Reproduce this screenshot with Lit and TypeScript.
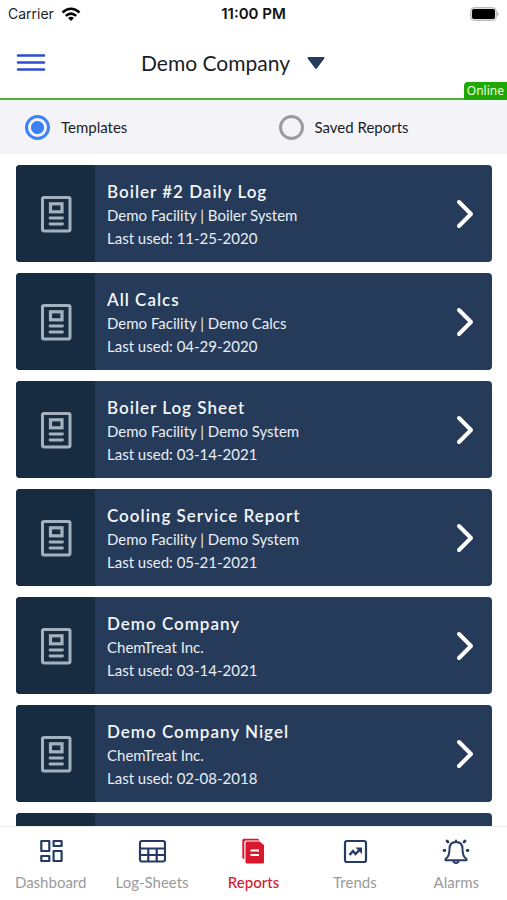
import { LitElement, html, css, svg, nothing } from "lit";
import { customElement, property, state } from "lit/decorators.js";
import { classMap } from "lit/directives/class-map.js";

interface Report {
  title: string;
  place: string;
  used: string;
}

const REPORTS: Report[] = [
  { title: "Boiler #2 Daily Log", place: "Demo Facility | Boiler System", used: "11-25-2020" },
  { title: "All Calcs", place: "Demo Facility | Demo Calcs", used: "04-29-2020" },
  { title: "Boiler Log Sheet", place: "Demo Facility | Demo System", used: "03-14-2021" },
  { title: "Cooling Service Report", place: "Demo Facility | Demo System", used: "05-21-2021" },
  { title: "Demo Company", place: "ChemTreat Inc.", used: "03-14-2021" },
  { title: "Demo Company Nigel", place: "ChemTreat Inc.", used: "02-08-2018" },
  { title: "", place: "", used: "" },
];

const ICONS = {
  Dashboard: svg`<g fill="none" stroke="currentColor" stroke-width="2.200" stroke-linejoin="round">
    <rect x="4.300" y="4" width="8" height="10"/><rect x="16.600" y="4" width="8" height="5"/>
    <rect x="4.300" y="19" width="8" height="5"/><rect x="16.600" y="14" width="8" height="10"/></g>`,
  "Log-Sheets": svg`<g fill="none" stroke="currentColor" stroke-width="2.200">
    <rect x="2" y="4" width="25" height="20.500" rx="2"/>
    <path d="M2 11.500H27M2 18H27M10.300 11.500V24M18.700 11.500V24"/></g>`,
  Reports: svg`<path fill="currentColor" d="M3.300 3.500Q3.300 1.700 5 1.700H19L20.800 3.500H7Q5.300 3.500 5.300 5.200V22.500L3.300 21Z"/>
    <path fill="currentColor" d="M6.500 6Q6.500 4.500 8 4.500H20.500L25 8V25.500Q25 26.500 24 26.500H8Q6.500 26.500 6.500 25Z"/>
    <path d="M11.500 13.500H20M11.500 18H20" stroke="#fff" stroke-width="2"/>`,
  Trends: svg`<rect x="4" y="4" width="21" height="21" rx="2" fill="none" stroke="currentColor" stroke-width="2.200"/>
    <path d="M8.500 18L12 14L14.500 17L19 12.500" fill="none" stroke="currentColor" stroke-width="2.400"/>
    <path d="M14.500 10.500H21V17Z" fill="currentColor"/>`,
  Alarms: svg`<g fill="none" stroke="currentColor" stroke-width="2" stroke-linejoin="round" stroke-linecap="round">
    <path d="M14 5C9.500 5 7.500 8 7.500 12C7.500 17.500 6.800 20 3.500 22V23.200H24.500V22C21.200 20 20.500 17.500 20.500 12C20.500 8 18.500 5 14 5Z"/>
    <path d="M11.500 24C12 26.500 16 26.500 16.500 24M14 4.500V3.500"/>
    <path d="M5 4L6 5M23 4L22 5M2 13.500H2.800M25.200 13.500H26" stroke-width="2.800"/></g>`,
};

type Tab = keyof typeof ICONS;

@customElement("report-card")
class ReportCard extends LitElement {
  @property({ attribute: false }) report!: Report;

  static styles = css`
    :host { display: block; }
    .card {
      display: flex;
      align-items: stretch;
      width: 100%;
      min-height: 97px;
      padding: 0;
      border: 0;
      border-radius: 4px;
      overflow: hidden;
      background: #263b59;
      color: #e9eef5;
      font: 15px/23px Lato, sans-serif;
      text-align: left;
      cursor: pointer;
    }
    .thumb {
      flex: none;
      width: 79px;
      display: grid;
      place-items: center;
      background: #182c41;
      color: #a5b1be;
    }
    .body {
      flex: 1;
      min-width: 0;
      padding: 14px 12px 12px;
    }
    .title, .line { display: block; }
    .title {
      font-size: 17px;
      line-height: 25px;
      font-weight: 600;
      letter-spacing: 1px;
      color: #f3f6fa;
    }
    .chevron {
      flex: none;
      align-self: center;
      margin-right: 16px;
      color: #fff;
    }
  `;

  render() {
    const { title, place, used } = this.report;
    return html`
      <button class="card" type="button">
        <span class="thumb">
          <svg width="32" height="38" viewBox="0 0 32 38" fill="none" stroke="currentColor" aria-hidden="true">
            <rect x="2.500" y="2.500" width="27.500" height="33.500" rx="1.500" stroke-width="3"/>
            <rect x="10.500" y="8.800" width="11.500" height="8" stroke-width="3.200"/>
            <path d="M10 23H22.500M10 29H22.500" stroke-width="2.800" stroke-linecap="round"/>
          </svg>
        </span>
        <span class="body">
          ${title
            ? html`<span class="title">${title}</span>
                <span class="line">${place}</span>
                <span class="line">Last used: ${used}</span>`
            : nothing}
        </span>
        <svg class="chevron" width="22" height="32" viewBox="0 0 22 32" fill="none" stroke="currentColor"
          stroke-width="4" stroke-linecap="round" stroke-linejoin="round" aria-hidden="true">
          <path d="M5 4L17 16L5 28"/>
        </svg>
      </button>
    `;
  }
}

@customElement("app-root")
class AppRoot extends LitElement {
  @state() private view = "Templates";
  @state() private tab: Tab = "Reports";

  static styles = css`
    :host {
      display: flex;
      flex-direction: column;
      height: 100vh;
      overflow: hidden;
      background: #fff;
      color: #1c1c1e;
      font: 15px/20px Lato, sans-serif;
    }
    .status {
      flex: none;
      display: grid;
      grid-template-columns: 1fr auto 1fr;
      align-items: center;
      height: 28px;
      padding: 0 8px;
      font: 14px/20px Inter, sans-serif;
    }
    .carrier { display: flex; align-items: center; gap: 7px; }
    .time { font-size: 15px; font-weight: 600; color: #111; }
    .battery { justify-self: end; }
    .header {
      flex: none;
      position: relative;
      display: grid;
      grid-template-columns: 30px 1fr 70px;
      align-items: center;
      height: 70px;
      padding: 0 16px;
      border-bottom: 2px solid #4bb536;
    }
    .menu {
      justify-self: start;
      display: flex;
      padding: 0;
      border: 0;
      background: none;
      color: #2b4fcb;
    }
    .company { justify-self: center; position: relative; display: flex; align-items: center; }
    .company select {
      appearance: none;
      border: 0;
      padding: 0 36px 0 0;
      background: none;
      color: #1c1c1e;
      font: 21px/30px Lato, sans-serif;
    }
    .company svg { position: absolute; right: 0; pointer-events: none; }
    .online {
      position: absolute;
      right: 0;
      bottom: -2px;
      padding: 0 3px;
      border-radius: 4px 0 0 0;
      background: #1fa805;
      color: #eaffdf;
      font: 12px/18px "Noto Sans", sans-serif;
    }
    .filter {
      flex: none;
      display: grid;
      grid-template: 54px / 1fr 1fr;
      margin: 0;
      padding: 0;
      border: 0;
      background: #f3f3f8;
    }
    .choice { display: flex; align-items: center; gap: 11px; padding-left: 25px; }
    .choice input {
      appearance: none;
      flex: none;
      width: 25px;
      height: 25px;
      margin: 0;
      border: 3px solid #9b9b9b;
      border-radius: 50%;
    }
    .choice input:checked {
      border-color: #3b82f6;
      background: radial-gradient(circle, #3b82f6 6px, transparent 7px);
    }
    .list {
      flex: 1;
      min-height: 0;
      display: flex;
      flex-direction: column;
      gap: 11px;
      padding: 11px 15px 0 16px;
      overflow-y: auto;
      scrollbar-width: none;
    }
    .tabs {
      flex: none;
      display: grid;
      grid-template-columns: repeat(5, 1fr);
      height: 73px;
      border-top: 1px solid #ececec;
      background: #fff;
    }
    .tab {
      display: flex;
      flex-direction: column;
      align-items: center;
      gap: 7px;
      padding-top: 10px;
      color: #9a9a9a;
      text-decoration: none;
    }
    .tab svg { color: #263b62; }
    .tab.active { color: #d9182d; font-weight: 500; }
    .tab.active svg { color: #d9182d; }
  `;

  render() {
    return html`
      <div class="status">
        <span class="carrier">Carrier
          <svg width="20" height="15" viewBox="0 0 20 15" fill="none" stroke="#000" stroke-width="2.600" aria-hidden="true">
            <path d="M1.500 5.500Q10 -2 18.500 5.500M4.800 8.900Q10 4.200 15.200 8.900"/>
            <path d="M10 14L7 11Q10 8.500 13 11Z" fill="#000" stroke="none"/>
          </svg>
        </span>
        <span class="time">11:00 PM</span>
        <svg class="battery" width="30" height="14" viewBox="0 0 30 14" aria-hidden="true">
          <rect x="1.500" y="0.500" width="26" height="13" rx="4" fill="#ddd" stroke="#bbb"/>
          <rect x="3" y="2" width="23" height="10" rx="2" fill="#000"/>
          <path d="M28.500 4.500Q31 7 28.500 9.500Z" fill="#aaa"/>
        </svg>
      </div>
      <header class="header">
        <button class="menu" type="button" aria-label="Menu">
          <svg width="30" height="20" viewBox="0 0 30 20" stroke="currentColor" stroke-width="2.600" stroke-linecap="round">
            <path d="M2 2.500H28M2 9.500H28M2 16.500H28"/>
          </svg>
        </button>
        <div class="company">
          <select aria-label="Company"><option>Demo Company</option></select>
          <svg width="20" height="14" viewBox="0 0 20 14" aria-hidden="true">
            <path d="M2.500 2H17.500L10 12Z" fill="#263b62" stroke="#263b62" stroke-width="2" stroke-linejoin="round"/>
          </svg>
        </div>
        <span class="online">Online</span>
      </header>
      <fieldset class="filter" aria-label="Report type">
        ${["Templates", "Saved Reports"].map(
          (name) => html`<label class="choice">
            <input type="radio" name="view" .checked=${this.view === name} @change=${() => (this.view = name)} />
            ${name}
          </label>`
        )}
      </fieldset>
      <main class="list">
        ${REPORTS.map((report) => html`<report-card .report=${report}></report-card>`)}
      </main>
      <nav class="tabs">
        ${(Object.keys(ICONS) as Tab[]).map(
          (name) => html`<a
            href="#${name.toLowerCase()}"
            class=${classMap({ tab: true, active: this.tab === name })}
            @click=${() => (this.tab = name)}
          >
            <svg width="28" height="28" viewBox="0 0 28 28" aria-hidden="true">${ICONS[name]}</svg>
            <span>${name}</span>
          </a>`
        )}
      </nav>
    `;
  }
}
